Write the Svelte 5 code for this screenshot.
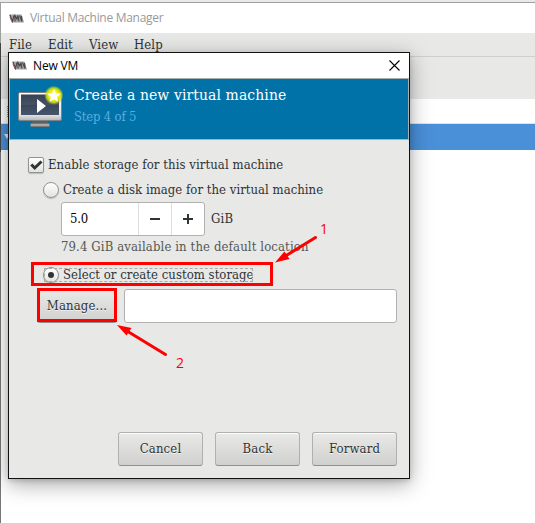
<script>
  const menus = ['File', 'Edit', 'View', 'Help'];
  const actions = ['Cancel', 'Back', 'Forward'];
</script>

{#snippet logo()}
  <svg class="logo" width="15" height="9" viewBox="0 0 15 9">
    <path d="M0 .5H12.5L15 8.5H3Z" fill="#a6a4a5" />
    <path d="M1 1L3.5 7.5L5 1.5M6 7.5V1.5L8 5L9 1.5L10 7.5M10.5 1.5L13 7.5L12.5 2" fill="none" stroke="#4a4648" stroke-width="1.1" />
    <path d="M1 3L3 8" stroke="#a65b69" stroke-width="1" />
  </svg>
{/snippet}

<div class="desktop">
  <div class="main-title">{@render logo()}<span>Virtual Machine Manager</span></div>
  <div class="menubar">
    {#each menus as menu}<span class={menu.toLowerCase()}>{menu}</span>{/each}
  </div>
  <div class="toolbar"></div>
  <div class="columns"><i></i></div>
  <div class="selected"><i></i></div>
  <div class="side"></div>

  <section class="dialog">
    <div class="dialog-title">
      {@render logo()}<span>New VM</span>
      <svg class="close" width="11" height="11" viewBox="0 0 11 11"><path d="M.5.5L10.5 10.5M10.5.5L.5 10.5" stroke="#000" stroke-width="1.1" /></svg>
    </div>
    <header>
      <svg class="monitor" width="48" height="44" viewBox="0 0 48 44">
        <defs>
          <linearGradient id="screen" x2="0" y2="1"><stop stop-color="#354154" /><stop offset=".48" stop-color="#465164" /><stop offset=".52" stop-color="#3a475b" /><stop offset="1" stop-color="#46556b" /></linearGradient>
          <linearGradient id="frame" x2="0" y2="1"><stop stop-color="#fff" /><stop offset=".8" stop-color="#e4e4e4" /><stop offset="1" stop-color="#b5b5b5" /></linearGradient>
          <radialGradient id="glow"><stop offset=".5" stop-color="#f5f500" /><stop offset=".75" stop-color="#d4e016" stop-opacity=".85" /><stop offset="1" stop-color="#a5c840" stop-opacity="0" /></radialGradient>
        </defs>
        <path d="M17 34H31L32 38H16Z" fill="#606060" />
        <rect x="14.5" y="37.5" width="19" height="3" rx="1" fill="#aaa" stroke="#777" />
        <rect x="2.5" y="6.5" width="43" height="28" rx="1.5" fill="url(#frame)" stroke="#808386" />
        <rect x="5" y="8.5" width="38" height="20.5" fill="url(#screen)" />
        <path d="M21 13L30 20L21 27Z" fill="#fff" />
        <circle cx="37.8" cy="9.3" r="9.7" fill="url(#glow)" />
        <path d="M38 2.8L40 7.4L44.6 7.8L41 11L42.1 15.8L38 13.2L33.7 15.8L34.9 11L31.3 7.8L36 7.4Z" fill="#fff" />
      </svg>
      <div class="heading">
        <h1>Create a new virtual machine</h1>
        <p>Step 4 of 5</p>
      </div>
    </header>
    <div class="content">
      <div class="row enable">
        <span class="check"><svg width="16" height="16" viewBox="0 0 16 16"><path d="M3.3 7.5L6.7 11L13.5 4.5" fill="none" stroke="#2e3436" stroke-width="3" /></svg></span>
        <span class="t-enable">Enable storage for this virtual machine</span>
      </div>
      <div class="row create"><span class="radio"></span><span class="t-create">Create a disk image for the virtual machine</span></div>
      <div class="size">
        <div class="spin">
          <span class="value">5.0</span>
          <span class="step"><svg width="10" height="10"><path d="M0 5H10" stroke="#2e3436" stroke-width="2" /></svg></span>
          <span class="step"><svg width="10" height="10"><path d="M0 5H10M5 0V10" stroke="#2e3436" stroke-width="2" /></svg></span>
        </div>
        <span class="gib">GiB</span>
      </div>
      <div class="available">79.4 GiB available in the default location</div>
      <div class="row custom"><span class="radio on"></span><span class="t-custom">Select or create custom storage</span></div>
      <div class="path"><button class="manage">Manage...</button><div class="entry"></div></div>
      <div class="actions">
        {#each actions as action}<button class={action.toLowerCase()}>{action}</button>{/each}
      </div>
    </div>
  </section>

  <svg class="notes" width="535" height="523">
    <g fill="none" stroke="#f00" stroke-width="3">
      <rect x="32.5" y="263.5" width="239" height="21" />
      <rect x="38.5" y="289.5" width="77" height="31" />
      <path d="M315.5 237.5L283 257.5M165.5 354.5L127 331" stroke-linecap="round" />
    </g>
    <path d="M275 262.5L284.5 251.5L289.5 259ZM117 325L131.5 328L126.5 335.5Z" fill="#f00" />
    <text x="320" y="234">1</text>
    <text x="176" y="368">2</text>
  </svg>
</div>

<style>
  :global(body) { margin: 0; overflow: hidden; }
  .desktop { position: relative; box-sizing: border-box; width: 535px; height: 523px; padding-left: 1px; border-top: 2px solid #e9e9e9; background: #fff; overflow: hidden; color: #2e3436; font: 13px/18px "DejaVu Serif Condensed", "DejaVu Serif", serif; font-stretch: condensed; white-space: nowrap; }
  .side { position: absolute; left: 0; top: 0; width: 1px; height: 521px; background: linear-gradient(#a0a0a0 41px, #444 41px, #444 150px, #777 150px); }
  .main-title { box-sizing: border-box; height: 31px; border-top: 1px solid #a0a0a0; display: flex; align-items: center; padding-left: 8px; gap: 6px; color: #999; font: 12px/18px "Open Sans", sans-serif; letter-spacing: -.29px; }
  .menubar { height: 23px; display: flex; background: #e8e8e6; line-height: 24px; letter-spacing: .1px; }
  .menubar span { width: 40px; }
  .menubar .file { padding-left: 8px; width: 39px; }
  .menubar .edit { width: 41px; }
  .menubar .view { width: 45px; }
  .toolbar { height: 42px; border-top: 1px solid #cfcfcd; background: #e8e8e6; }
  .columns { height: 24px; display: flex; align-items: center; padding-left: 6px; }
  .columns i { height: 11px; border-left: 1px dotted #999; }
  .selected { box-sizing: border-box; height: 27px; border-top: 1px solid #dde3e8; background: #4a90d9; }
  .selected i { display: block; width: 0; margin: 10px 0 0 3px; border: 3px solid transparent; border-top: 5px solid #dceaf8; }

  .dialog { position: absolute; box-sizing: border-box; left: 8px; top: 50px; width: 402px; height: 427px; display: flex; flex-direction: column; border: 1px solid #111; background: #e8e8e6; box-shadow: 0 5px 20px rgba(0,0,0,.35), 0 2px 5px rgba(0,0,0,.15); }
  .dialog-title { height: 25px; display: flex; align-items: center; background: #fff; padding: 0 9px 0 3px; gap: 6px; color: #000; font: 12px/18px "Open Sans", sans-serif; letter-spacing: -.15px; }
  .close { margin-left: auto; }
  header { box-sizing: border-box; height: 62px; display: flex; background: #0072a8; border: 1px solid #a9b0b2; }
  .monitor { margin: 7px 0 0 6px; flex: none; }
  .heading { margin-left: 10px; }
  h1 { margin: 5px 0 0; color: #fff; font-size: 15.5px; line-height: 22px; font-weight: 400; letter-spacing: .11px; }
  p { margin: 2px 0 0; color: #59ace0; line-height: 18px; letter-spacing: -.2px; }
  .content { flex: 1; display: flex; flex-direction: column; }
  .row { display: flex; align-items: center; gap: 4px; height: 18px; }
  .enable { margin: 16px 0 0 19px; }
  .create { margin: 7px 0 0 34px; }
  .t-enable { letter-spacing: .07px; }
  .t-create { letter-spacing: .03px; }
  .t-custom { letter-spacing: .03px; }
  .check, .radio { box-sizing: border-box; flex: none; width: 16px; height: 16px; border: 1px solid #929290; background: linear-gradient(#fff, #e2e2e0); box-shadow: 0 1px 1px #bbb; }
  .check { border-radius: 2px; display: flex; }
  .check svg { margin: -1px; flex: none; }
  .radio { border-radius: 50%; display: grid; place-items: center; }
  .on::after { content: ""; width: 6px; height: 6px; border-radius: 50%; background: #2e3436; }
  .size { margin: 3px 0 0 52px; display: flex; align-items: center; gap: 6px; }
  .spin { box-sizing: border-box; width: 144px; height: 34px; display: flex; border: 1px solid #b1b1af; border-radius: 3px; background: #fff; }
  .value { width: 68px; padding-left: 8px; line-height: 32px; color: #000; letter-spacing: -.2px; }
  .step { box-sizing: border-box; width: 33px; display: grid; place-items: center; border-left: 1px solid #ddd; }
  .gib { letter-spacing: .2px; }
  .available { margin: 2px 0 0 52px; color: #555856; line-height: 18px; letter-spacing: .12px; }
  .custom { margin: 10px 0 0 33px; outline: 1px dashed #aaa; outline-offset: -3px; width: 212px; padding-left: 1px; }
  .path { display: flex; margin: 5px 0 0 28px; gap: 7px; }
  button { box-sizing: border-box; height: 34px; padding: 0; border: 1px solid #b0b0ae; border-bottom-color: #8f8f8d; border-radius: 3px; background: linear-gradient(#e9e9e7, #d0d0ce); box-shadow: inset 0 1px #fff; color: #2e3436; font: inherit; letter-spacing: .15px; text-shadow: 0 1px rgba(255,255,255,.7); }
  .manage { width: 80px; }
  .entry { box-sizing: border-box; width: 273px; height: 34px; border: 1px solid #b1b1af; border-radius: 3px; background: #fff; }
  .actions { display: flex; gap: 12px; margin: auto 0 12px 109px; }
  .actions button { width: 85px; }
  .notes { position: absolute; left: 0; top: -2px; pointer-events: none; }
  .notes text { fill: #f00; font: 14px "Open Sans", sans-serif; }
</style>
